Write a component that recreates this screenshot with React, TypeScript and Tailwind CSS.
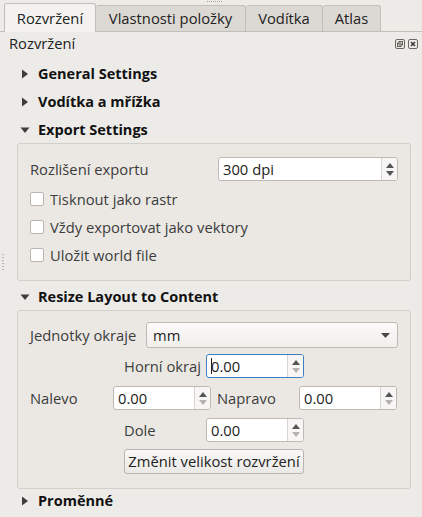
import React from "react";

const font = { fontFamily: "'Open Sans', 'DejaVu Sans', sans-serif" };

function Arrow({ open }: { open?: boolean }) {
  return open ? (
    <svg width="10" height="10" viewBox="0 0 10 10" className="shrink-0">
      <path d="M0.5 2.5 L9.5 2.5 L5 8 Z" fill="#3c3c3c" />
    </svg>
  ) : (
    <svg width="10" height="10" viewBox="0 0 10 10" className="shrink-0">
      <path d="M2 0.5 L2 9.5 L8 5 Z" fill="#3c3c3c" />
    </svg>
  );
}

function Section({ title, open, className = "" }: { title: string; open?: boolean; className?: string }) {
  return (
    <div className={`flex h-[28px] items-center gap-[8px] pl-[20px] ${className}`}>
      <Arrow open={open} />
      <span className="text-[14.5px] font-bold text-[#111]">{title}</span>
    </div>
  );
}

function SpinButtons({ downDisabled }: { downDisabled?: boolean }) {
  return (
    <div className="flex h-full w-[16px] flex-col items-center justify-center gap-[3px] border-l border-[#d8d5d0] bg-[#f7f6f5]">
      <svg width="8" height="5" viewBox="0 0 8 5">
        <path d="M0 5 L4 0 L8 5 Z" fill="#555" />
      </svg>
      <svg width="8" height="5" viewBox="0 0 8 5">
        <path d="M0 0 L4 5 L8 0 Z" fill={downDisabled ? "#b5b2ad" : "#555"} />
      </svg>
    </div>
  );
}

function Spin({ value, width, focused, downDisabled }: { value: string; width: string; focused?: boolean; downDisabled?: boolean }) {
  return (
    <div
      className={`flex h-[24px] ${width} items-stretch overflow-hidden rounded-[3px] border bg-white ${
        focused ? "border-[#3d7fc1]" : "border-[#bdb9b3]"
      }`}
    >
      <div className="flex flex-1 items-center pl-[4px] text-[14.75px] text-[#222]">
        {focused && <span className="mr-[-1px] h-[16px] w-[1px] bg-[#222]" />}
        {value}
      </div>
      <SpinButtons downDisabled={downDisabled} />
    </div>
  );
}

function Check({ label }: { label: string }) {
  return (
    <div className="flex h-[28px] items-center gap-[6px]">
      <div className="h-[14px] w-[14px] rounded-[2px] border border-[#b9b5af] bg-white" />
      <span className="text-[14.75px] text-[#3c3c3c]">{label}</span>
    </div>
  );
}

export default function App() {
  return (
    <div style={font} className="relative flex h-[517px] w-[422px] flex-col overflow-hidden bg-[#edebe8] text-[#3c3c3c]">
      {/* splitter grip */}
      <div className="flex h-[4px] justify-center pt-[1px]">
        <div className="ml-[7px] h-[1px] w-[15px] border-t border-dotted border-[#a9a6a1]" />
      </div>

      {/* tabs */}
      <div className="flex h-[28px] items-end border-b border-[#c2beb8] pl-[4px]">
        <div className="z-10 mb-[-1px] flex h-[29px] w-[92px] items-center justify-center rounded-t-[3px] border border-b-0 border-[#c2beb8] bg-[#f3f2f0] text-[14.75px] text-[#222]">
          Rozvržení
        </div>
        <div className="flex h-[26px] w-[150px] items-center justify-center rounded-t-[3px] border border-b-0 border-l-0 border-[#c2beb8] bg-[#dcd9d4] text-[14.75px] text-[#222]">
          Vlastnosti položky
        </div>
        <div className="flex h-[26px] w-[77px] items-center justify-center rounded-t-[3px] border border-b-0 border-l-0 border-[#c2beb8] bg-[#dcd9d4] text-[14.75px] text-[#222]">
          Vodítka
        </div>
        <div className="flex h-[26px] w-[58px] items-center justify-center rounded-t-[3px] border border-b-0 border-l-0 border-[#c2beb8] bg-[#dcd9d4] text-[14.75px] text-[#222]">
          Atlas
        </div>
      </div>

      {/* dock title */}
      <div className="flex h-[23px] items-center justify-between pl-[9px] pr-[4px]">
        <span className="text-[14.75px] text-[#222]">Rozvržení</span>
        <div className="flex gap-[3px]">
          <svg width="10" height="10" viewBox="0 0 10 10">
            <rect x="0.5" y="0.5" width="9" height="9" rx="1.5" fill="none" stroke="#6b6863" />
            <rect x="4" y="2.5" width="3.5" height="3.5" fill="none" stroke="#6b6863" />
            <rect x="2.5" y="4" width="3.5" height="3.5" fill="none" stroke="#6b6863" />
          </svg>
          <svg width="10" height="10" viewBox="0 0 10 10">
            <rect x="0.5" y="0.5" width="9" height="9" rx="1.5" fill="none" stroke="#6b6863" />
            <path d="M3 3 L7 7 M7 3 L3 7" stroke="#3c3a37" strokeWidth="1.6" />
          </svg>
        </div>
      </div>

      {/* scroll content */}
      <div className="relative flex flex-1 flex-col pt-[5px]">
        <div className="absolute left-[2px] top-[199px] flex flex-col gap-[2px]">
          {[0, 1, 2, 3, 4, 5].map((i) => (
            <div key={i} className="h-[1px] w-[2px] bg-[#b9b6b1]" />
          ))}
        </div>

        <Section title="General Settings" />
        <Section title="Vodítka a mřížka" />
        <Section title="Export Settings" open />

        <div className="ml-[17px] mr-[11px] mt-[-1px] flex h-[138px] flex-col rounded-[3px] border border-[#d3cfc9] bg-[#ebe8e4] px-[12px] pt-[13px]">
          <div className="flex h-[24px] items-center justify-between">
            <span className="text-[14.75px]">Rozlišení exportu</span>
            <Spin value="300 dpi" width="w-[180px]" />
          </div>
          <div className="mt-[4px] flex flex-col">
            <Check label="Tisknout jako rastr" />
            <Check label="Vždy exportovat jako vektory" />
            <Check label="Uložit world file" />
          </div>
        </div>

        <Section title="Resize Layout to Content" open className="mt-[2px]" />

        <div className="ml-[17px] mr-[11px] mt-[-1px] flex h-[179px] flex-col rounded-[3px] border border-[#d3cfc9] bg-[#ebe8e4] px-[12px] pt-[11px]">
          <div className="flex h-[26px] items-center">
            <span className="w-[116px] text-[14.75px]">Jednotky okraje</span>
            <div className="flex h-[26px] flex-1 items-center justify-between rounded-[3px] border border-[#bdb9b3] bg-gradient-to-b from-[#fbfaf9] to-[#f1efec] pl-[6px] pr-[7px] text-[14.75px] text-[#222]">
              mm
              <svg width="9" height="5" viewBox="0 0 9 5">
                <path d="M0 0 L9 0 L4.5 5 Z" fill="#4a4845" />
              </svg>
            </div>
          </div>
          <div className="mt-[6px] flex h-[24px] items-center">
            <span className="ml-[94px] w-[82px] text-[14.75px]">Horní okraj</span>
            <Spin value="0.00" width="w-[98px]" focused downDisabled />
          </div>
          <div className="mt-[8px] flex h-[24px] items-center">
            <span className="w-[83px] text-[14.75px]">Nalevo</span>
            <Spin value="0.00" width="w-[98px]" downDisabled />
            <span className="ml-[6px] w-[82px] text-[14.75px]">Napravo</span>
            <Spin value="0.00" width="w-[98px]" downDisabled />
          </div>
          <div className="mt-[8px] flex h-[24px] items-center">
            <span className="ml-[94px] w-[82px] text-[14.75px]">Dole</span>
            <Spin value="0.00" width="w-[98px]" downDisabled />
          </div>
          <div className="ml-[94px] mt-[7px] flex h-[25px] w-[180px] items-center justify-center rounded-[3px] border border-[#b9b5af] bg-gradient-to-b from-[#f9f8f7] to-[#ebe9e6] text-[14.75px] text-[#222]">
            Změnit velikost rozvržení
          </div>
        </div>

        <Section title="Proměnné" className="mt-[-2px]" />
      </div>
    </div>
  );
}
